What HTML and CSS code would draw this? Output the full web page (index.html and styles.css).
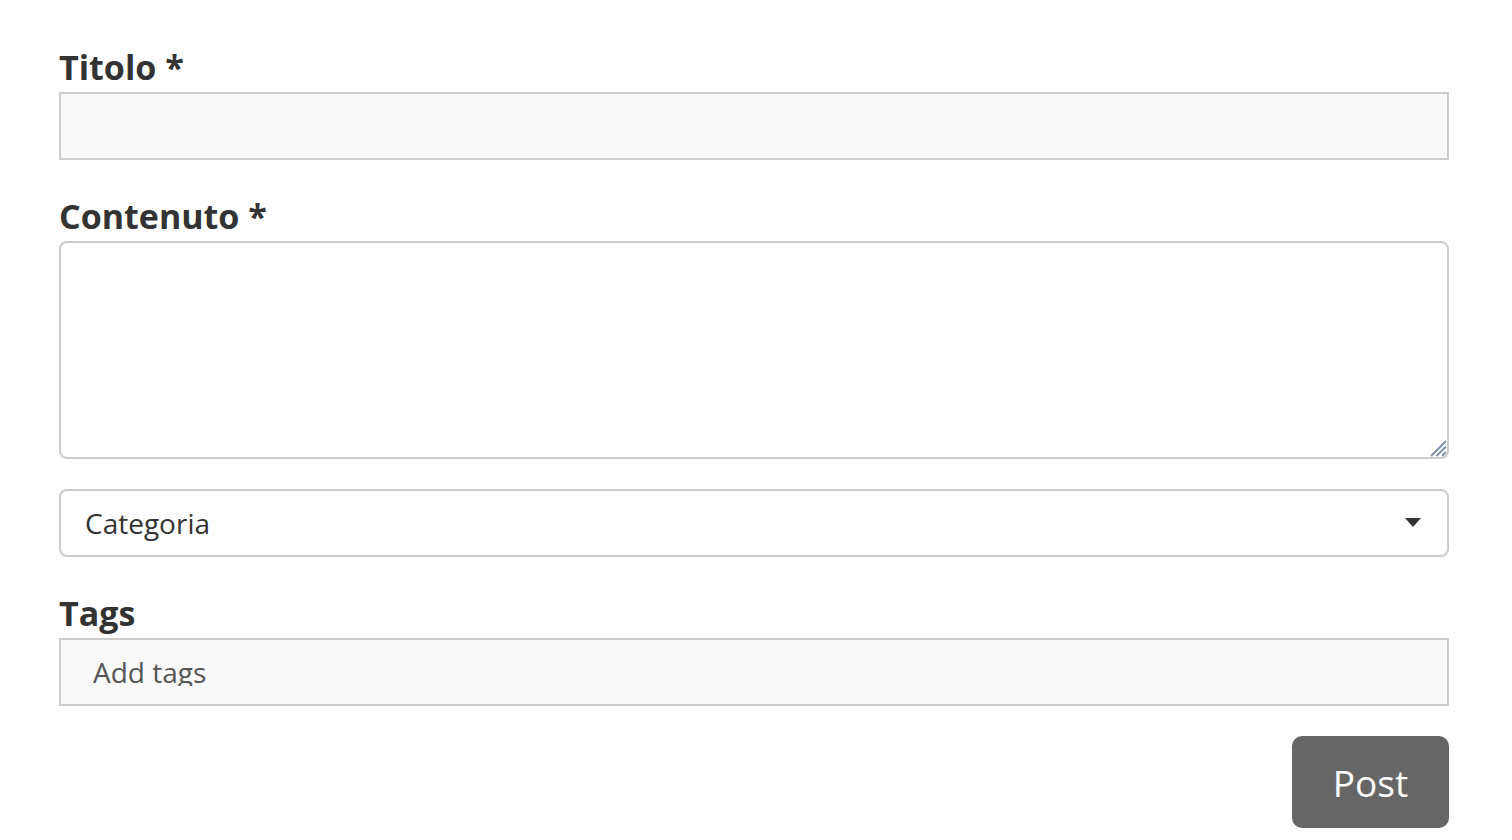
FILE: index.html
```
<!DOCTYPE html>
<html>
<head>
<meta charset="utf-8">
<link rel="stylesheet" href="styles.css">
</head>
<body>
<form class="post-form">
  <div class="field">
    <label class="label">Titolo *</label>
    <div class="input input-flat"></div>
  </div>
  <div class="field field-content">
    <label class="label">Contenuto *</label>
    <div class="textarea">
      <svg class="grip" width="20" height="20" viewBox="0 0 20 20"><path d="M19 4 L4 19 M19 9.5 L9.5 19 M19 15 L15 19" stroke="#7f93ad" stroke-width="2"/></svg>
    </div>
  </div>
  <div class="field field-select">
    <div class="select">
      <span class="select-text">Categoria</span>
      <svg class="caret" width="16" height="10" viewBox="0 0 16 10"><path d="M0 0 H16 L8 9 Z" fill="#333"/></svg>
    </div>
  </div>
  <div class="field field-tags">
    <label class="label">Tags</label>
    <div class="input input-flat tags"><span class="tags-text">Add tags</span></div>
  </div>
  <div class="actions">
    <button type="button" class="btn">Post</button>
  </div>
</form>
</body>
</html>
```
FILE: styles.css
```
html, body {
  margin: 0;
  padding: 0;
  background: #fff;
  font-family: "Open Sans", "Liberation Sans", sans-serif;
}
.post-form {
  padding: 44px 63px 0 59px;
  display: flex;
  flex-direction: column;
}
.field {
  display: flex;
  flex-direction: column;
}
.label {
  font-weight: 700;
  font-size: 34px;
  line-height: 46px;
  color: #333;
  margin-bottom: 2px;
}
.input {
  box-sizing: border-box;
  height: 68px;
  border: 2px solid #cccccc;
  background: #f9f9f9;
}
.field-content { margin-top: 33px; }
.field-select { margin-top: 30px; }
.field-tags { margin-top: 33px; }
.textarea {
  box-sizing: border-box;
  height: 218px;
  border: 2px solid #cccccc;
  border-radius: 8px;
  background: #fff;
  position: relative;
}
.grip {
  position: absolute;
  right: 0;
  bottom: 0;
}
.select {
  box-sizing: border-box;
  height: 68px;
  border: 2px solid #cccccc;
  border-radius: 8px;
  background: #fff;
  display: flex;
  align-items: center;
  justify-content: space-between;
  padding: 0 26px 0 24px;
}
.select-text {
  font-size: 28px;
  color: #333;
}
.tags {
  padding-left: 32px;
}
.tags-text {
  display: block;
  font-size: 28px;
  color: #555;
  line-height: 28px;
  height: 28px;
  margin-top: 18px;
  overflow: hidden;
}
.actions {
  display: flex;
  justify-content: flex-end;
  margin-top: 30px;
}
.btn {
  width: 157px;
  height: 92px;
  border: none;
  border-radius: 10px;
  background: #666;
  color: #fff;
  font-family: "Open Sans", "Liberation Sans", sans-serif;
  font-size: 37px;
  padding: 0;
}
```
